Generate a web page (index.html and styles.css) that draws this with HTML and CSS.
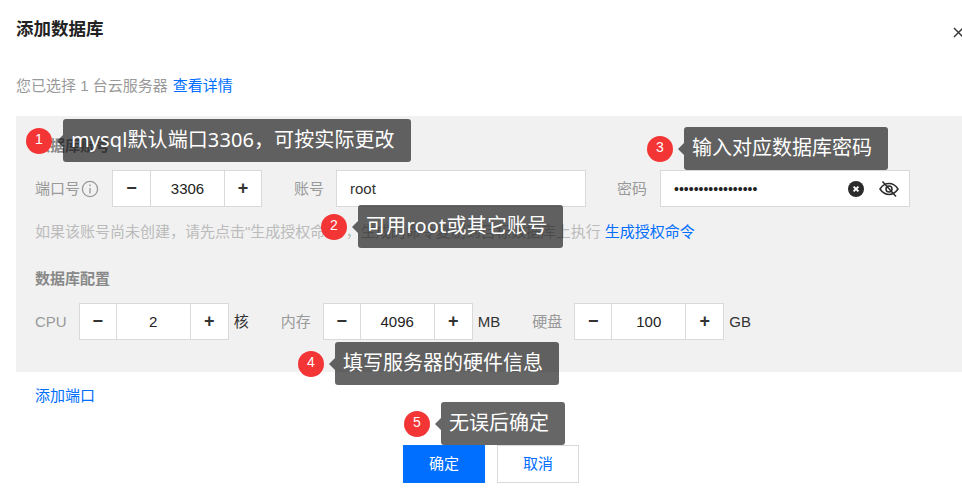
FILE: index.html
```html
<!DOCTYPE html>
<html lang="zh-CN">
<head>
    <meta charset="UTF-8">
    <meta name="viewport" content="width=device-width, initial-scale=1.0">
    <title>添加数据库</title>
    <link rel="stylesheet" href="styles.css">
</head>
<body>
    <div class="dialog">
        <div class="dialog-head">
            <h1 class="dialog-title">添加数据库</h1>
            <svg class="close-icon" viewBox="0 0 11 11"><path d="M1 1l9 9M10 1l-9 9"/></svg>
        </div>
        <p class="selected">您已选择 1 台云服务器 <a class="link">查看详情</a></p>

        <div class="panel">
            <div class="section-title">数据库账号</div>
            <div class="row">
                <span class="label">端口号</span>
                <svg class="info-icon" viewBox="0 0 18 18">
                    <circle cx="9" cy="9" r="7.6"/>
                    <path d="M9 8v5.5M9 4.4v1.8"/>
                </svg>
                <div class="stepper stepper-first">
                    <span class="step">−</span><span class="step-value">3306</span><span class="step">+</span>
                </div>
                <span class="label label-account">账号</span>
                <div class="text-input">root</div>
                <span class="label label-password">密码</span>
                <div class="text-input">
                    <span class="dots">•••••••••••••••••</span>
                    <svg class="clear-icon" viewBox="0 0 16 16">
                        <circle cx="8" cy="8" r="8"/>
                        <path d="M5.6 5.6l4.8 4.8M10.4 5.6l-4.8 4.8"/>
                    </svg>
                    <svg class="eye-icon" viewBox="0 0 20 18">
                        <path d="M1 9c2.4-3.6 5.4-5.4 9-5.4s6.600 1.800 9 5.400c-2.400 3.600-5.400 5.400-9 5.400S3.400 12.600 1 9z"/>
                        <circle cx="10" cy="9" r="3"/>
                        <path d="M3.500 1.500l13.500 15"/>
                    </svg>
                </div>
            </div>
            <p class="hint">如果该账号尚未创建，请先点击"生成授权命令"，生成的命令复制到目标数据库上执行 <a class="link">生成授权命令</a></p>

            <div class="section-title section-config">数据库配置</div>
            <div class="row">
                <span class="label">CPU</span>
                <div class="stepper">
                    <span class="step">−</span><span class="step-value">2</span><span class="step">+</span>
                </div>
                <span class="unit">核</span>
                <span class="label label-spec">内存</span>
                <div class="stepper">
                    <span class="step">−</span><span class="step-value">4096</span><span class="step">+</span>
                </div>
                <span class="unit">MB</span>
                <span class="label label-spec">硬盘</span>
                <div class="stepper">
                    <span class="step">−</span><span class="step-value">100</span><span class="step">+</span>
                </div>
                <span class="unit">GB</span>
            </div>
        </div>

        <a class="link add-port">添加端口</a>

        <div class="actions">
            <button class="btn btn-primary">确定</button>
            <button class="btn btn-cancel">取消</button>
        </div>
    </div>

    <!-- tutorial callouts drawn over the dialog -->
    <div class="note note-1"><span class="note-num">1</span><span class="note-text">mysql默认端口3306，可按实际更改</span></div>
    <div class="note note-2"><span class="note-num">2</span><span class="note-text">可用root或其它账号</span></div>
    <div class="note note-3"><span class="note-num">3</span><span class="note-text">输入对应数据库密码</span></div>
    <div class="note note-4"><span class="note-num">4</span><span class="note-text">填写服务器的硬件信息</span></div>
    <div class="note note-5"><span class="note-num">5</span><span class="note-text">无误后确定</span></div>
</body>
</html>
```

FILE: styles.css
```css
* { box-sizing: border-box; margin: 0; padding: 0; }
html, body { height: 503px; overflow: hidden; }
body { position: relative; background: #fff; color: #333; font-family: "Liberation Sans", "Noto Sans CJK SC", sans-serif; font-size: 15px; line-height: 20px; }

.dialog { width: 966px; padding: 18px 0 0 16px; }
.dialog-head { display: flex; justify-content: space-between; align-items: flex-start; }
.dialog-title { font-size: 17.5px; line-height: 22px; font-weight: bold; color: #222; }
.close-icon { width: 11px; height: 11px; margin: 9px 2px 0 0; fill: none; stroke: #333; stroke-width: 1.4; }
.selected { margin-top: 36px; color: #999; }
.selected .link { margin-left: 1px; }
.link { color: #006eff; cursor: pointer; }

.panel { margin-top: 20px; padding: 20px 19px 32px; background: #f1f1f1; }
.section-title { font-weight: bold; color: #888; }
.section-config { margin-top: 27px; }
.row { display: flex; align-items: center; height: 37px; margin-top: 14px; }
.label { color: #999; }
.label-account { margin: 0 12px 0 32px; }
.label-password { margin: 0 13px 0 31px; }
.label-spec { margin-left: 32px; }
.label + .stepper { margin-left: 12px; }
.info-icon { width: 18px; height: 18px; margin-left: 1px; fill: none; stroke: #999; stroke-width: 1.3; }
.info-icon + .stepper-first { margin-left: 13px; }

.stepper { display: flex; width: 150px; height: 37px; background: #fff; border: 1px solid #d9d9d9; }
.step { width: 36px; flex: 1; text-align: center; font-size: 18px; font-weight: bold; line-height: 34px; color: #333; }
.stepper-first .step { width: 37px; }
.step:first-child { flex: none; }
.step-value { flex: none; width: 75px; text-align: center; line-height: 35px; color: #222; border-left: 1px solid #d9d9d9; border-right: 1px solid #d9d9d9; }
.unit { margin-left: 5px; color: #333; }

.text-input { display: flex; align-items: center; width: 250px; height: 37px; padding: 0 10px 0 13px; background: #fff; border: 1px solid #d9d9d9; color: #333; }
.dots { flex: 1; font-size: 14px; color: #222; }
.clear-icon { width: 16px; height: 16px; margin-right: 15px; fill: #2b2b2b; stroke: #fff; stroke-width: 2; }
.clear-icon circle { stroke: none; }
.eye-icon { width: 20px; height: 18px; fill: none; stroke: #2b2b2b; stroke-width: 1.5; }
.hint { margin-top: 15px; color: #bbb; white-space: nowrap; }

.add-port { display: block; margin: 14px 0 0 19px; }
.actions { display: flex; justify-content: center; gap: 12px; margin-top: 39px; }
.btn { width: 82px; height: 38px; font: inherit; cursor: pointer; }
.btn-primary { background: #006eff; color: #fff; border: none; }
.btn-cancel { background: #fff; color: #006eff; border: 1px solid #d9d9d9; }

.note { position: absolute; display: flex; align-items: center; gap: 11px; }
.note-1 { left: 26px; top: 119px; letter-spacing: 0.1px; }
.note-2 { left: 321px; top: 205px; letter-spacing: 0.2px; }
.note-3 { left: 647px; top: 127px; }
.note-4 { left: 298px; top: 342px; }
.note-5 { left: 404px; top: 402px; }
.note-num { width: 26px; height: 26px; padding-bottom: 3px; border-radius: 50%; background: #f33535; color: #fff; font-size: 14px; line-height: 23px; text-align: center; }
.note-text { position: relative; height: 43px; padding: 0 16px 0 8px; border-radius: 3px; background: rgba(0, 0, 0, 0.6); color: #fff; font-family: "Noto Sans", "Noto Sans CJK SC", sans-serif; font-size: 20px; line-height: 42px; white-space: nowrap; }
.note-text::before { content: ""; position: absolute; left: -6px; top: 16px; border-style: solid; border-width: 6px 6px 6px 0; border-color: transparent rgba(0, 0, 0, 0.6) transparent transparent; }
```
